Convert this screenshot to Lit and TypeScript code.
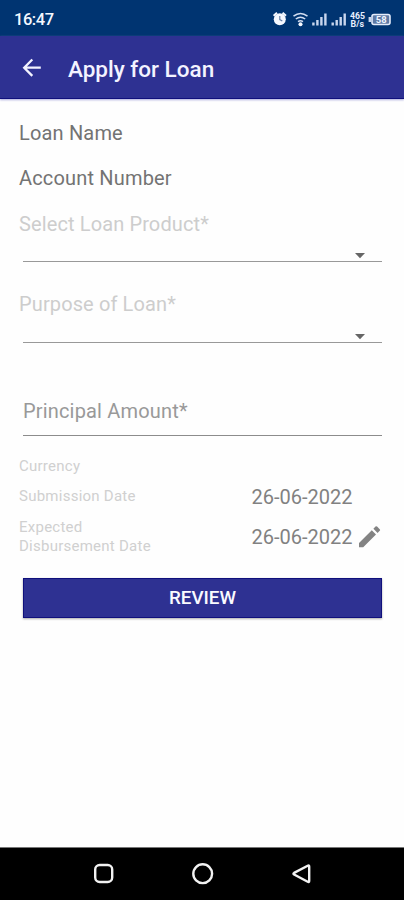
import { LitElement, html, css, svg } from "lit";
import { customElement, property } from "lit/decorators.js";

@customElement("status-bar")
class StatusBar extends LitElement {
  static styles = css`
    :host { display: flex; height: 36px; box-sizing: border-box; padding: 1px 12px 0 14px; background: #003471; align-items: center; justify-content: space-between; }
    .time { color: #f4f8ff; font: 500 16.5px/36px Roboto, sans-serif; letter-spacing: -0.45px; padding-top: 2px; }
    svg { display: block; }
    .rate { font: 700 8.5px Roboto, sans-serif; fill: #e8efff; }
    .level { font: 700 9.5px Roboto, sans-serif; fill: #f0f5ff; }
  `;
  render() {
    const bars = (x: number) => [3, 5.5, 8.5, 12].map((h, i) => svg`<rect x=${x + i * 4} y=${24.5 - h} width="2.4" height=${h}/>`);
    return html`
      <span class="time">16:47</span>
      <svg width="120" height="35" viewBox="272 0 120 35" fill="#c9d6ee">
        <circle cx="279.8" cy="18.3" r="6" fill="#f5f8ff"/>
        <path d="M273.6 14.7l3.4-3M286 14.7l-3.4-3" stroke="#f5f8ff" stroke-width="2"/>
        <path d="M279.8 15v3.6l2.5 1.5" fill="none" stroke="#6780a8" stroke-width="1.2"/>
        <g fill="none" stroke="#d3def2" stroke-width="1.5"><path d="M293.5 15.2q7-5.4 14 0M295.8 18q4.7-3.6 9.4 0M298 20.7q2.5-1.8 5 0"/></g>
        <circle cx="300.5" cy="23.2" r="2" fill="#f5f8ff"/>
        ${bars(312.2)}${bars(331.5)}
        <text class="rate" x="350" y="17.5" textLength="15" lengthAdjust="spacingAndGlyphs">465</text>
        <text class="rate" x="350.5" y="26.3" textLength="13.5" lengthAdjust="spacingAndGlyphs">B/s</text>
        <rect x="368.6" y="16" width="2.5" height="5"/>
        <rect x="372" y="13.5" width="18" height="10" rx="2" fill="#5d79a5" stroke="#e4ecfb" stroke-width="1.6"/>
        <text class="level" x="375.7" y="22" textLength="11">58</text>
      </svg>`;
  }
}

@customElement("select-field")
class SelectField extends LitElement {
  @property() label = "";
  static styles = css`
    :host { display: block; height: 80.5px; font: 400 20px/24px Roboto, sans-serif; letter-spacing: 0.12px; color: #cdcdcd; }
    .box { height: 26.5px; margin: 0 3px 0 4px; border-bottom: 1.4px solid #999; display: flex; align-items: flex-end; justify-content: flex-end; box-sizing: border-box; padding: 0 17px 2px 0; }
    svg { display: block; }
  `;
  render() {
    return html`<div>${this.label}</div>
      <div class="box"><svg width="10" height="6"><path d="M0 0h10L5 5.3z" fill="#666"/></svg></div>`;
  }
}

@customElement("app-root")
class AppRoot extends LitElement {
  static styles = css`
    :host { display: flex; flex-direction: column; height: 900px; background: #fefefe; font-family: Roboto, sans-serif; overflow: hidden; }
    svg { display: block; }
    .bar { height: 62.5px; flex: none; box-sizing: border-box; background: #2e3192; border-bottom: 1.5px solid #10107c; box-shadow: 0 1px 2px #aaaadd; display: flex; align-items: center; padding: 3px 0 0 20px; gap: 24px; }
    h1 { margin: 0; padding-top: 2px; font: 500 22.5px/30px Roboto, sans-serif; color: #f3f3ff; }
    main { flex: 1; padding: 22px 19px 0; color: #737373; font-size: 20px; line-height: 24px; letter-spacing: 0.17px; }
    .info { height: 45.6px; }
    .amount { margin: 26px 3px 0 4px; height: 36px; border-bottom: 1.4px solid #8c8c8c; color: #999; }
    .currency { margin-top: 21px; }
    .small { color: #d0d0d0; font-size: 15px; line-height: 19px; letter-spacing: 0.25px; }
    .row { display: grid; grid-template-columns: 232.5px 107px 24px; align-items: center; color: #818181; }
    .first { margin-top: 9px; height: 24px; }
    .second { margin-top: 9.5px; height: 38px; }
    .date { letter-spacing: 0; font-size: 20px; }
    button { display: block; width: 359px; height: 40px; margin: 21.5px 0 0 4px; padding: 1px 0 0; border: 1px solid #10107c; background: #2e3192; color: #fafaff; font: 500 18.8px/20px Roboto, sans-serif; box-shadow: 0 1px 2px #aaa; }
    nav { height: 53px; flex: none; box-sizing: border-box; border-top: 1px solid #777; background: #000; }
  `;
  render() {
    return html`
      <status-bar></status-bar>
      <header class="bar">
        <svg width="24" height="24" viewBox="0 0 24 24" fill="none" stroke="#f3f3ff" stroke-width="2.3"><path d="M20.8 11.7H4.8M12.3 3.5L4.2 11.7l8.1 8.2"/></svg>
        <h1>Apply for Loan</h1>
      </header>
      <main>
        <div class="info">Loan Name</div>
        <div class="info">Account Number</div>
        <select-field label="Select Loan Product*"></select-field>
        <select-field label="Purpose of Loan*"></select-field>
        <div class="amount">Principal Amount*</div>
        <div class="small currency">Currency</div>
        <div class="row first"><span class="small">Submission Date</span><span class="date">26-06-2022</span></div>
        <div class="row second">
          <span class="small">Expected<br>Disbursement Date</span><span class="date">26-06-2022</span>
          <svg width="22" height="22" viewBox="0 0 22 22" fill="#838383"><path d="M0 17.1v4.2h4.2L17 8.5 12.8 4.3zM20.7 4.8a1.1 1.1 0 0 0 0-1.6L18.1.6a1.1 1.1 0 0 0-1.6 0l-2.1 2.1 4.2 4.2z"/></svg>
        </div>
        <button>REVIEW</button>
      </main>
      <nav>
        <svg width="404" height="52" viewBox="0 848 404 52" fill="none" stroke="#f2f2f2" stroke-width="2.4">
          <rect x="95.2" y="865" width="17" height="17" rx="4.5"/>
          <circle cx="202.7" cy="873.7" r="9.4"/>
          <path d="M309.2 866.5v14.4q0 1.6-1.5.8l-13.6-7.2q-1.3-.8 0-1.6l13.6-7.2q1.5-.8 1.5.8z"/>
        </svg>
      </nav>`;
  }
}
